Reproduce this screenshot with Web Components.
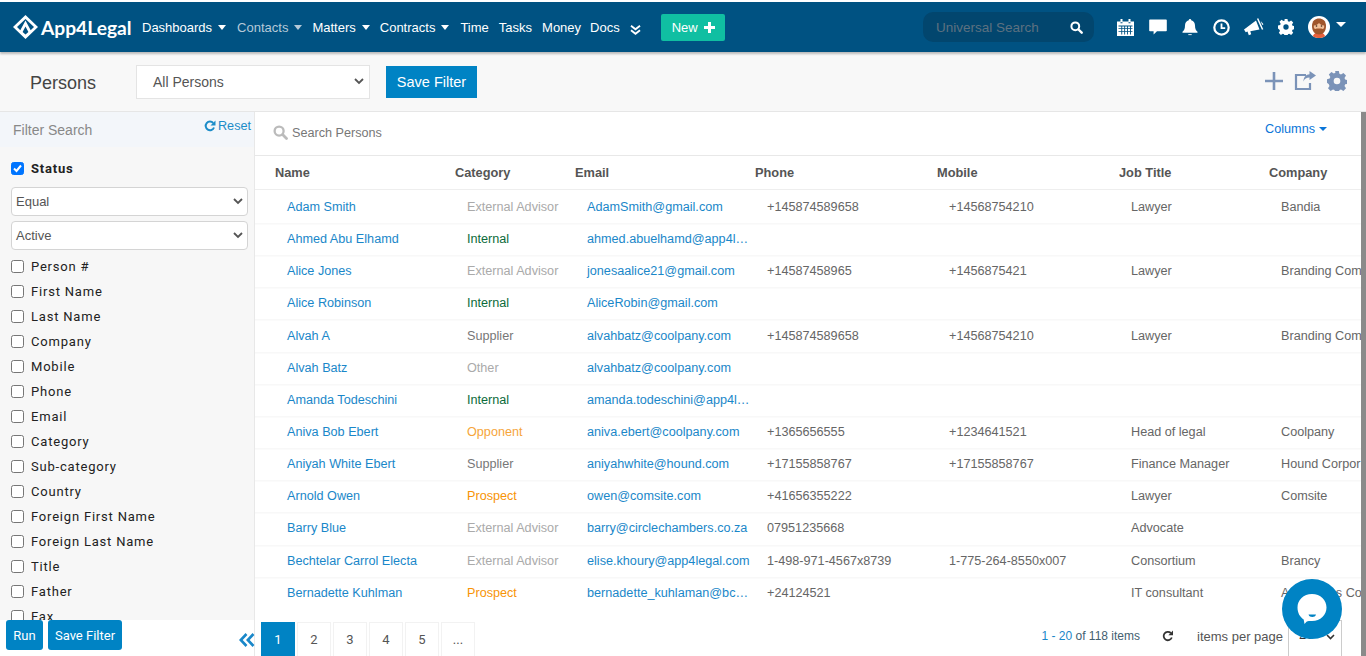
<!DOCTYPE html>
<html lang="en">
<head>
<meta charset="utf-8">
<title>Persons</title>
<style>
  html, body { margin: 0; height: 100%; overflow: hidden; }
  body { font-family: "Liberation Sans", Arial, sans-serif; font-size: 14px; color: #555; background: #fff; }
</style>
</head>
<body>
<app-page></app-page>
<script>
const GEAR = "M9.800 0h4.400l.7 3.300 1.900.8 2.900-1.800 3.100 3.100-1.800 2.900.8 1.900 3.200.7v4.400l-3.200.7-.8 1.900 1.800 2.900-3.100 3.100-2.900-1.800-1.900.8-.7 3.200H9.800l-.7-3.200-1.900-.8-2.900 1.800-3.100-3.100 1.800-2.900-.8-1.900L0 14.200V9.800l3.200-.7.8-1.900L2.200 4.300l3.100-3.100 2.900 1.800 1.900-.8zM12 8a4 4 0 1 0 0 8 4 4 0 0 0 0-8z";
const icons = {
  calendar: `<svg width="17" height="17" viewBox="0 0 17 17"><path fill="#fff" d="M0 2.500h17V17H0z"/><path fill="#fff" d="M3.500 0h2v4h-2zM11.500 0h2v4h-2z"/><path fill="#005282" d="M3.500 3.300h2v1h-2zM11.500 3.300h2v1h-2z"/><g fill="#005282"><path d="M1.500 6.500h14v.9h-14zM1.500 9.200h14v.9h-14zM1.500 11.900h14v.9h-14zM4.300 6.500h.9v9h-.9zM7.200 6.500h.9v9h-.9zM10.100 6.500h.9v9h-.9zM13 6.500h.9v9H13z"/></g></svg>`,
  chat: `<svg width="18" height="16" viewBox="0 0 18 16"><path fill="#fff" d="M1 .5h16a.8.8 0 0 1 .8.8v10.200a.8.8 0 0 1-.8.8H8l-3.400 3.200v-3.200H1a.8.8 0 0 1-.8-.8V1.300A.8.8 0 0 1 1 .5z"/></svg>`,
  bell: `<svg width="16" height="17" viewBox="0 0 16 17"><path fill="#fff" d="M8 0a1.200 1.200 0 0 1 1.200 1.300C11.800 1.900 13 4 13 6.500c0 3.500 1 4.800 2.500 6.300v.9H.5v-.9C2 11.300 3 10 3 6.500 3 4 4.200 1.900 6.800 1.300A1.200 1.200 0 0 1 8 0z"/><path fill="#fff" d="M6.300 15.200h3.400v.9H6.300z"/></svg>`,
  clock: `<svg width="17" height="17" viewBox="0 0 17 17"><circle cx="8.500" cy="8.500" r="7.200" fill="none" stroke="#fff" stroke-width="2.200"/><path fill="none" stroke="#fff" stroke-width="1.800" d="M8.500 4.500v4.600h3.700"/></svg>`,
  horn: `<svg width="20" height="18" viewBox="0 0 20 18"><path fill="#fff" d="M0 11.500 12 2.500l3.500 9-9.200 1.700.9 3-2.400 1-1.300-3.700-1.800.7z"/><path fill="none" stroke="#fff" stroke-width="1.500" d="M13.600 .5l5 11"/><path fill="#fff" d="M16.700 3l2.800 3.200-1.300.8z"/></svg>`,
  gear: `<svg width="16" height="16" viewBox="0 0 24 24"><path fill="currentColor" fill-rule="evenodd" d="${GEAR}"/></svg>`,
  search: `<svg width="13" height="13" viewBox="0 0 13 13"><circle cx="5.300" cy="5.300" r="3.900" fill="none" stroke="currentColor" stroke-width="2"/><path stroke="currentColor" stroke-width="2.400" stroke-linecap="round" d="M8.500 8.500l3.200 3.200"/></svg>`,
  face: `<svg width="22" height="22" viewBox="0 0 22 22"><circle cx="11" cy="11" r="11" fill="#fff"/><path fill="#e8603c" d="M4.800 20.200c1-2.700 3.200-3.700 6.200-3.700s5.200 1 6.200 3.700A10 10 0 0 1 11 22a10 10 0 0 1-6.200-1.800z"/><path fill="#a0562c" d="M4 10c0-5.200 3.300-7.500 7-7.500S18 4.800 18 10c0 5.200-2.800 8.500-7 8.500S4 15.200 4 10z"/><path fill="#f3c19a" d="M5.800 9.500c2.400 0 3.900-1 5.200-2.400 1.300 1.400 2.800 2.400 5.200 2.400.2 2.600-.5 3.500-1.700 3.500-1-.6-6-.6-7 0-1.200 0-1.900-.9-1.700-3.500z"/><circle cx="8.500" cy="10" r=".8" fill="#3b2416"/><circle cx="13.500" cy="10" r=".8" fill="#3b2416"/></svg>`
};

class NavItem extends HTMLElement {
  constructor() {
    super();
    this.attachShadow({ mode: "open" });
    this.shadowRoot.innerHTML = `
      <style>
        :host { display: inline-flex; align-items: center; gap: 6px; color: #fff; font-size: 13px; white-space: nowrap; }
        :host([muted]) { color: #b5c9d8; }
        i { display: none; width: 0; height: 0; border-left: 4px solid transparent; border-right: 4px solid transparent; border-top: 5px solid currentColor; }
        :host([caret]) i { display: block; }
      </style>
      <slot></slot><i></i>`;
  }
}
customElements.define("nav-item", NavItem);

class AppNavbar extends HTMLElement {
  constructor() {
    super();
    this.attachShadow({ mode: "open" });
    this.shadowRoot.innerHTML = `
      <style>
        :host { display: flex; align-items: center; height: 50px; margin-top: 2px; background: #005282; box-shadow: 0 2px 2px #bbb; flex: none; position: relative; z-index: 3; }
        .logo { display: flex; align-items: center; gap: 3px; margin-left: 13px; color: #fff; font: 700 19.200px Lato, sans-serif; width: 119px; white-space: nowrap; }
        .logo svg { flex: none; }
        .items { display: flex; align-items: center; margin-left: 10px; }
        .items nav-item { margin-right: 10px; }
        .items .wide { margin-right: 11px; }
        .items .tight { margin-right: 9px; }
        .more { margin-top: 6px; display: flex; }
        .new { display: flex; align-items: center; gap: 6px; margin-left: 20px; width: 64px; height: 27px; box-sizing: border-box; padding-left: 11px; background: #10bfa2; color: #fff; font-size: 13px; border-radius: 2px; }
        .search { display: flex; align-items: center; justify-content: space-between; box-sizing: border-box; width: 171px; height: 30px; margin-left: auto; padding: 0 11px 0 13px; border-radius: 10px; background: #02466e; color: #5d7180; font-size: 13.500px; }
        .search span { color: #fff; display: flex; }
        .tools { display: flex; align-items: center; margin: 0 20px 0 23px; color: #fff; }
        .tools > * { display: flex; flex: none; }
        .caret { width: 0; height: 0; margin: -6px 0 0 6px; border-left: 5px solid transparent; border-right: 5px solid transparent; border-top: 5px solid #fff; }
      </style>
      <div class="logo">
        <svg width="25" height="24" viewBox="0 0 25 24"><path fill="#fff" fill-rule="evenodd" d="M12.500 0 25 12 12.500 24 0 12zM12.500 4 4 12l3.300 3.200 5.200-9.700 5.200 9.700L21 12zM12.500 11.500l-2.900 5.400 2.900 2.700 2.900-2.700z"/></svg>
        <span>App4Legal</span>
      </div>
      <div class="items">
        <nav-item caret class="wide">Dashboards</nav-item>
        <nav-item caret muted>Contacts</nav-item>
        <nav-item caret>Matters</nav-item>
        <nav-item caret class="wide">Contracts</nav-item>
        <nav-item>Time</nav-item>
        <nav-item>Tasks</nav-item>
        <nav-item class="tight">Money</nav-item>
        <nav-item>Docs</nav-item>
        <span class="more"><svg width="11" height="10" viewBox="0 0 11 10"><path fill="none" stroke="#fff" stroke-width="1.900" d="M1 .8l4.500 3.500L10 .8M1 5.200l4.500 3.500L10 5.200"/></svg></span>
      </div>
      <div class="new">New <svg width="11" height="11" viewBox="0 0 11 11"><path fill="#fff" d="M4 0h3v4h4v3H7v4H4V7H0V4h4z"/></svg></div>
      <div class="search">Universal Search <span>${icons.search}</span></div>
      <div class="tools">
        <span style="width:32px">${icons.calendar}</span>
        <span style="width:33px">${icons.chat}</span>
        <span style="width:31px">${icons.bell}</span>
        <span style="width:31px">${icons.clock}</span>
        <span style="width:34px">${icons.horn}</span>
        <span style="width:30px">${icons.gear}</span>
        <span>${icons.face}</span>
        <span class="caret"></span>
      </div>`;
  }
}
customElements.define("app-navbar", AppNavbar);

class PageBar extends HTMLElement {
  constructor() {
    super();
    this.attachShadow({ mode: "open" });
    this.shadowRoot.innerHTML = `
      <style>
        :host { display: flex; align-items: center; height: 60px; box-sizing: border-box; background: #f8f8f8; border-bottom: 1px solid #e6e6e6; flex: none; }
        h1 { width: 106px; margin: 4px 0 0 30px; font-size: 18px; font-weight: 400; color: #444; }
        .sel { display: flex; align-items: center; justify-content: space-between; box-sizing: border-box; width: 234px; height: 34px; padding: 0 5px 0 16px; background: #fff; border: 1px solid #e4e4e4; font-size: 14px; color: #555; }
        button { margin-left: 16px; width: 91px; height: 32px; background: #0083c4; color: #fff; border: 0; padding: 0; font: 14.500px "Liberation Sans", sans-serif; }
        .act { display: flex; align-items: center; gap: 10px; margin: -2px 19px 0 auto; }
        .act span { display: flex; }
      </style>
      <h1>Persons</h1>
      <div class="sel">All Persons <svg width="10" height="7" viewBox="0 0 10 7"><path fill="none" stroke="#555" stroke-width="1.800" d="M1 1l4 4 4-4"/></svg></div>
      <button>Save Filter</button>
      <div class="act">
        <span><svg width="20" height="20" viewBox="0 0 20 20"><path fill="#7b93b8" d="M8.700 1h2.600v7.700H19v2.600h-7.700V19H8.700v-7.700H1V8.700h7.700z"/></svg></span>
        <span><svg width="23" height="19" viewBox="0 0 23 19"><path fill="none" stroke="#7b93b8" stroke-width="2.200" d="M12 4H2v14h14v-6"/><path fill="#7b93b8" d="M15.500 0 22 4.500 15.500 9V6.500c-3 0-5 1-6 4 0-4.500 2.500-7 6-7.200z"/></svg></span>
        <span><svg width="20" height="20" viewBox="0 0 24 24"><path fill="#7b93b8" fill-rule="evenodd" d="${GEAR}"/></svg></span>
      </div>`;
  }
}
customElements.define("page-bar", PageBar);

class FilterCheck extends HTMLElement {
  constructor() {
    super();
    this.attachShadow({ mode: "open" });
    this.shadowRoot.innerHTML = `
      <style>
        :host { display: flex; align-items: center; gap: 7px; height: 25px; flex: none; font: 13px Roboto, sans-serif; letter-spacing: .8px; color: #222; }
        :host([on]) { font-weight: 700; }
        b { width: 13px; height: 13px; box-sizing: border-box; border: 1px solid #767676; border-radius: 2.500px; background: #fff; flex: none; display: flex; }
        :host([on]) b { background: #0075ff; border-color: #0075ff; }
        svg { display: none; }
        :host([on]) svg { display: block; }
      </style>
      <b><svg width="11" height="11" viewBox="0 0 11 11"><path fill="none" stroke="#fff" stroke-width="2" d="M2 5.500l2.500 2.500L9 2.500"/></svg></b><slot></slot>`;
  }
}
customElements.define("filter-check", FilterCheck);

class FilterSelect extends HTMLElement {
  constructor() {
    super();
    this.attachShadow({ mode: "open" });
    this.shadowRoot.innerHTML = `
      <style>
        :host { display: flex; align-items: center; justify-content: space-between; box-sizing: border-box; height: 29px; flex: none; margin: 0 6px 5px 0; padding: 0 4px; background: #fff; border: 1px solid #d4d4d4; border-radius: 4px; font-size: 13px; color: #555; }
      </style>
      <slot></slot><svg width="10" height="7" viewBox="0 0 10 7"><path fill="none" stroke="#555" stroke-width="1.800" d="M1 1l4 4 4-4"/></svg>`;
  }
}
customElements.define("filter-select", FilterSelect);

class FilterPanel extends HTMLElement {
  constructor() {
    super();
    this.attachShadow({ mode: "open" });
    const fields = ["Person #", "First Name", "Last Name", "Company", "Mobile", "Phone", "Email", "Category", "Sub-category", "Country", "Foreign First Name", "Foreign Last Name", "Title", "Father", "Fax"];
    this.shadowRoot.innerHTML = `
      <style>
        :host { display: flex; flex-direction: column; width: 255px; box-sizing: border-box; flex: none; background: #f7f7f7; border-right: 1px solid #e8e8e8; overflow: hidden; }
        .head { display: flex; justify-content: space-between; height: 35px; flex: none; box-sizing: border-box; padding: 6px 3px 0 13px; background: #f3f6fa; color: #888; font-size: 14px; }
        .head span { line-height: 24px; }
        .reset { display: flex; gap: 2px; height: 15px; align-items: center; color: #1c8cc8; font-size: 12.650px; }
        .list { display: flex; flex-direction: column; flex: 1; min-height: 0; padding: 9px 0 0 11px; overflow: hidden; }
        .status { margin-bottom: 6px; }
        .last { margin-bottom: 4px; }
        .foot { display: flex; gap: 5px; height: 36px; flex: none; box-sizing: border-box; padding: 0 0 0 6px; background: #fff; }
        button { height: 30px; padding: 0; background: #0083c4; color: #fff; border: 0; border-radius: 3px; font: 400 13px Roboto, sans-serif; }
        .run { width: 37px; }
        .save { width: 74px; }
      </style>
      <div class="head"><span>Filter Search</span>
        <div class="reset"><svg width="12" height="12" viewBox="0 0 12 12"><path fill="none" stroke="#1c8cc8" stroke-width="2" d="M10 7.500A4.300 4.300 0 1 1 9.200 3"/><path fill="#1c8cc8" d="M11.500 .5v5h-5z"/></svg>Reset</div></div>
      <div class="list">
        <filter-check on class="status">Status</filter-check>
        <filter-select>Equal</filter-select>
        <filter-select class="last">Active</filter-select>
        ${fields.map((f) => `<filter-check>${f}</filter-check>`).join("")}
      </div>
      <div class="foot"><button class="run">Run</button><button class="save">Save Filter</button></div>`;
  }
}
customElements.define("filter-panel", FilterPanel);

const catColors = { "External Advisor": "#aaa", Internal: "#0b6b3a", Supplier: "#777", Other: "#aaa", Opponent: "#f6a53a", Prospect: "#f89406" };
const persons = [
  ["Adam Smith", "External Advisor", "AdamSmith@gmail.com", "+145874589658", "+14568754210", "Lawyer", "Bandia"],
  ["Ahmed Abu Elhamd", "Internal", "ahmed.abuelhamd@app4l…", "", "", "", ""],
  ["Alice Jones", "External Advisor", "jonesaalice21@gmail.com", "+14587458965", "+1456875421", "Lawyer", "Branding Com"],
  ["Alice Robinson", "Internal", "AliceRobin@gmail.com", "", "", "", ""],
  ["Alvah A", "Supplier", "alvahbatz@coolpany.com", "+145874589658", "+14568754210", "Lawyer", "Branding Com"],
  ["Alvah Batz", "Other", "alvahbatz@coolpany.com", "", "", "", ""],
  ["Amanda Todeschini", "Internal", "amanda.todeschini@app4l…", "", "", "", ""],
  ["Aniva Bob Ebert", "Opponent", "aniva.ebert@coolpany.com", "+1365656555", "+1234641521", "Head of legal", "Coolpany"],
  ["Aniyah White Ebert", "Supplier", "aniyahwhite@hound.com", "+17155858767", "+17155858767", "Finance Manager", "Hound Corpor"],
  ["Arnold Owen", "Prospect", "owen@comsite.com", "+41656355222", "", "Lawyer", "Comsite"],
  ["Barry Blue", "External Advisor", "barry@circlechambers.co.za", "07951235668", "", "Advocate", ""],
  ["Bechtelar Carrol Electa", "External Advisor", "elise.khoury@app4legal.com", "1-498-971-4567x8739", "1-775-264-8550x007", "Consortium", "Brancy"],
  ["Bernadette Kuhlman", "Prospect", "bernadette_kuhlaman@bc…", "+24124521", "", "IT consultant", "Associates Co"]
];

class PersonsTable extends HTMLElement {
  constructor() {
    super();
    this.attachShadow({ mode: "open" });
    this.shadowRoot.innerHTML = `
      <style>
        :host { display: flex; flex-direction: column; flex: 1; min-height: 0; font-size: 12.650px; color: #666; overflow: hidden; }
        .top { display: flex; align-items: center; height: 44px; flex: none; box-sizing: border-box; padding: 0 34px 2px 18px; gap: 4px; border-bottom: 1px solid #e8e8e8; color: #777; }
        .top svg { color: #bbb; }
        .cols { margin: -8px 0 0 auto; display: flex; align-items: center; gap: 4px; color: #0a75d8; }
        .cols i { width: 0; height: 0; border-left: 4px solid transparent; border-right: 4px solid transparent; border-top: 4px solid currentColor; }
        .row { display: grid; grid-template-columns: 180px 120px 180px 182px 182px 150px 92px; padding-left: 20px; align-items: center; height: 32.167px; box-shadow: 0 1.500px 0 #f8f8f8; flex: none; }
        .row > div { padding-left: 12px; white-space: nowrap; overflow: hidden; min-width: 0; }
        .row a { color: #1a87c9; text-decoration: none; }
        .hd { height: 34px; margin-bottom: .8px; box-sizing: border-box; box-shadow: none; border-bottom: 1px solid #eee; font-weight: 700; font-size: 12.800px; color: #555; }
        .hd > div { padding-left: 0; }
      </style>
      <div class="top">${icons.search.replace('width="13" height="13"', 'width="15" height="15"')}Search Persons<span class="cols">Columns <i></i></span></div>
      <div class="row hd"><div>Name</div><div>Category</div><div>Email</div><div>Phone</div><div>Mobile</div><div>Job Title</div><div>Company</div></div>
      ${persons.map((p) => `
        <div class="row">
          <div><a>${p[0]}</a></div>
          <div style="color:${catColors[p[1]]}">${p[1]}</div>
          <div><a>${p[2]}</a></div>
          <div>${p[3]}</div><div>${p[4]}</div><div>${p[5]}</div>
          <div>${p[6]}</div>
        </div>`).join("")}`;
  }
}
customElements.define("persons-table", PersonsTable);

class PagerBar extends HTMLElement {
  constructor() {
    super();
    this.attachShadow({ mode: "open" });
    this.shadowRoot.innerHTML = `
      <style>
        :host { display: flex; align-items: flex-end; height: 47px; flex: none; background: #fff; font-size: 13px; color: #555; }
        .pages { display: flex; gap: 2px; margin-left: 6px; font-family: Roboto, sans-serif; }
        .pages span { display: flex; align-items: center; justify-content: center; width: 34px; height: 34px; border: solid #f2f2f2; border-width: 1px 1px 0; box-sizing: border-box; }
        .pages .on { background: #0083c4; border-color: #0083c4; color: #fff; }
        .info { margin-left: auto; display: flex; align-items: center; height: 40px; }
        .count { font-size: 12px; color: #446070; }
        .count span { color: #1a87c9; }
        .ref { display: flex; margin: 0 23px 0 22px; }
        .box { display: flex; align-items: center; justify-content: space-between; box-sizing: border-box; width: 54px; height: 36px; margin: 0 19px 0 5px; padding: 0 6px 9px 10px; border: 1px solid #ccc; border-bottom: 0; align-self: flex-end; color: #333; }
        .box svg { margin-top: 5px; }
      </style>
      <div class="pages"><span class="on">1</span><span>2</span><span>3</span><span>4</span><span>5</span><span>...</span></div>
      <div class="info">
        <span class="count"><span>1 - 20</span> of 118 items</span>
        <span class="ref"><svg width="12" height="12" viewBox="0 0 12 12"><path fill="none" stroke="#333" stroke-width="1.800" d="M9.800 7.500A4.200 4.200 0 1 1 8.800 3"/><path fill="#333" d="M11 .5v4.800H6.400z"/></svg></span>
        <span>items per page</span>
        <span class="box">20<svg width="9" height="6" viewBox="0 0 9 6"><path fill="none" stroke="#333" stroke-width="1.600" d="M1 1l3.500 3.500L8 1"/></svg></span>
      </div>`;
  }
}
customElements.define("pager-bar", PagerBar);

class ChatBubble extends HTMLElement {
  constructor() {
    super();
    this.attachShadow({ mode: "open" });
    this.shadowRoot.innerHTML = `
      <style>
        :host { position: fixed; left: 1282px; top: 579px; width: 60px; height: 60px; border-radius: 50%; background: #0083c4; display: flex; align-items: center; justify-content: center; z-index: 5; }
      </style>
      <svg width="34" height="34" viewBox="0 0 34 34"><path fill="#fff" d="M17 2c8.500 0 14.500 6 14.500 13.500S25.500 29 17 29c-2.500 0-4 0-5.500.8L9.500 32l-.8-4.500C5 25 2.500 21 2.500 15.500 2.500 8 8.500 2 17 2z"/><path fill="#0083c4" d="M13.500 22.500h7.500c-.5 1.800-2 2.500-3.700 2.500s-3.300-.7-3.800-2.500z"/></svg>`;
  }
}
customElements.define("chat-bubble", ChatBubble);

class AppPage extends HTMLElement {
  constructor() {
    super();
    this.attachShadow({ mode: "open" });
    this.shadowRoot.innerHTML = `
      <style>
        :host { display: flex; flex-direction: column; height: 100vh; overflow: hidden; }
        .body { display: flex; flex: 1; min-height: 0; }
        main { display: flex; flex-direction: column; flex: 1; min-width: 0; position: relative; }
        .back { position: absolute; left: -16px; bottom: 9px; display: flex; }
        .bar { width: 5px; background: #8a8a8a; flex: none; }
      </style>
      <app-navbar></app-navbar>
      <page-bar></page-bar>
      <div class="body">
        <filter-panel></filter-panel>
        <main>
          <persons-table></persons-table>
          <pager-bar></pager-bar>
          <span class="back"><svg width="16" height="14" viewBox="0 0 16 14"><path fill="none" stroke="#1a87c9" stroke-width="2.600" d="M7.500 1 1.800 7l5.700 6M14.500 1 8.800 7l5.700 6"/></svg></span>
        </main>
        <div class="bar"></div>
      </div>
      <chat-bubble></chat-bubble>`;
  }
}
customElements.define("app-page", AppPage);
</script>
</body>
</html>
